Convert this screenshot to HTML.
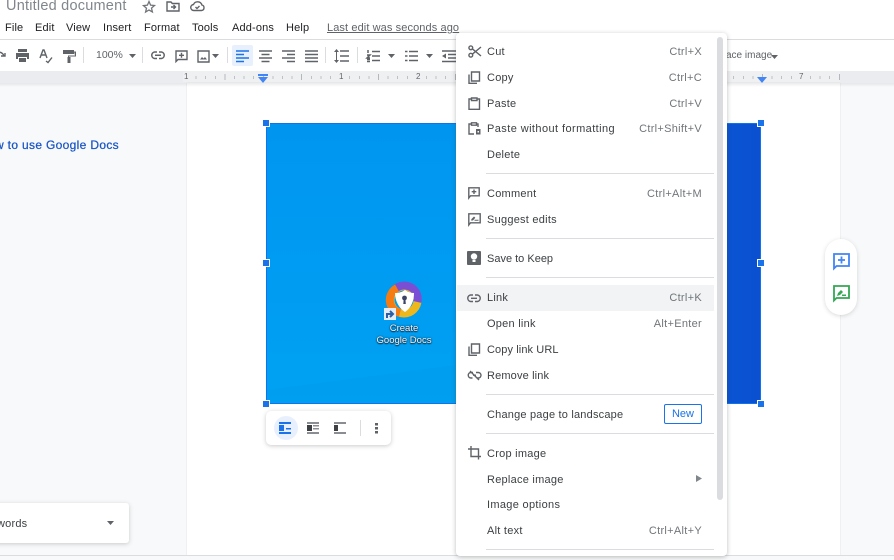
<!DOCTYPE html>
<html><head><meta charset="utf-8">
<style>
html,body{margin:0;padding:0}
body{width:894px;height:560px;overflow:hidden;position:relative;background:#f8f9fa;font-family:"Liberation Sans",sans-serif;color:#3c4043}
.a{position:absolute;white-space:nowrap}
.m{font-size:11px;line-height:14px;color:#3c4043;letter-spacing:.25px}
.k{font-size:11px;line-height:14px;color:#70757a;right:192px;letter-spacing:.3px}
.menu{font-size:11px;line-height:14px;color:#202124;top:21px;letter-spacing:.15px}
.sep{position:absolute;left:486px;width:228px;height:1px;background:#dadce0}
svg{position:absolute;overflow:visible}
.ic{fill:none;stroke:#5f6368;stroke-width:1.4}
.tl{fill:none;stroke:#5f6368;stroke-width:1.5}
.n{font-size:8px;line-height:10px;color:#5f6368;background:#eff0f2;padding:0 1px;top:72px}
</style></head><body>
<!-- header -->
<div class="a" style="left:0;top:0;width:894px;height:40px;background:#fff"></div>
<div class="a" style="left:0;top:39px;width:894px;height:1px;background:#dadce0"></div>
<div class="a" style="left:6px;top:-3px;font-size:14.5px;line-height:18px;color:#80868b;letter-spacing:.22px">Untitled document</div>
<svg style="left:142px;top:0" width="14" height="13" viewBox="0 0 14 13"><path fill="none" stroke="#70757a" stroke-width="1.300" d="M7 1.500l1.600 3.600 3.900.4-3 2.600.9 3.800L7 10l-3.400 2 .9-3.800-3-2.600 3.900-.4z"/></svg>
<svg style="left:166px;top:1px" width="14" height="11" viewBox="0 0 14 11"><path class="ic" d="M1 1h4l1.300 1.500H13v7.500H1z"/><path d="M5 6h4M7.500 4l2 2-2 2" class="ic"/></svg>
<svg style="left:190px;top:0" width="15" height="12" viewBox="0 0 15 12"><path class="ic" d="M4 10.500h7.500a2.800 2.800 0 0 0 .4-5.500A4.500 4.500 0 0 0 3.500 4.500 3 3 0 0 0 4 10.500z"/><path class="ic" stroke-width="1" d="M5.500 7l1.500 1.500 2.500-2.500"/></svg>
<div class="a menu" style="left:5px">File</div>
<div class="a menu" style="left:35px">Edit</div>
<div class="a menu" style="left:66px">View</div>
<div class="a menu" style="left:103px">Insert</div>
<div class="a menu" style="left:144px">Format</div>
<div class="a menu" style="left:192px">Tools</div>
<div class="a menu" style="left:232px">Add-ons</div>
<div class="a menu" style="left:286px">Help</div>
<div class="a" style="left:327px;top:21px;font-size:11px;line-height:14px;color:#5f6368;text-decoration:underline;letter-spacing:.1px">Last edit was seconds ago</div>
<!-- toolbar -->
<div class="a" style="left:0;top:40px;width:894px;height:31px;background:#fff"></div>
<svg style="left:0;top:50px" width="8" height="10" viewBox="0 0 8 10"><path class="ic" d="M-2 2c3 0 5 1 6 4M1 6h4V3" stroke-width="1.500"/></svg>
<svg style="left:15px;top:49px" width="15" height="13" viewBox="0 0 15 13"><path fill="#5f6368" d="M3 0h9v3H3zM1 4h13v6h-2V8H3v2H1zM4 9h7v4H4z"/></svg>
<svg style="left:39px;top:49px" width="15" height="14" viewBox="0 0 15 14"><path class="ic" d="M1 9l3-8h1l3 8M2.300 6h4.500M7 12l2 1.500 4-5"/></svg>
<svg style="left:63px;top:49px" width="13" height="14" viewBox="0 0 13 14"><path fill="#5f6368" d="M0 1h11v4H0zM11 2.500h2v5H6V9H5V6.500h7zM4.500 8h3v6h-3z"/></svg>
<div class="a" style="left:83px;top:47px;width:1px;height:16px;background:#dadce0"></div>
<div class="a" style="left:96px;top:48px;font-size:10.500px;line-height:14px;color:#5f6368">100%</div>
<svg style="left:129px;top:54px" width="8" height="4"><path fill="#5f6368" d="M0 0h7L3.500 4z"/></svg>
<div class="a" style="left:142px;top:47px;width:1px;height:16px;background:#dadce0"></div>
<svg style="left:151px;top:51px" width="14" height="9" viewBox="0 0 14 9"><path class="tl" d="M6 1H3.500a3.300 3.300 0 0 0 0 6.500H6M8 1h2.500a3.300 3.300 0 0 1 0 6.500H8M4 4.300h6"/></svg>
<svg style="left:175px;top:50px" width="13" height="13" viewBox="0 0 13 13"><path class="ic" d="M1 1h11v8.500H3L1 11.500zM6.500 2.800v5M4 5.300h5"/></svg>
<svg style="left:197px;top:50px" width="13" height="13" viewBox="0 0 13 13"><path class="ic" d="M1 1h11v11H1z"/><path fill="#5f6368" d="M3 9.500l2-2.500 1.500 1.500L8 7l2 2.500z"/></svg>
<svg style="left:212px;top:54px" width="8" height="4"><path fill="#5f6368" d="M0 0h7L3.500 4z"/></svg>
<div class="a" style="left:227px;top:47px;width:1px;height:16px;background:#dadce0"></div>
<div class="a" style="left:232px;top:45px;width:21px;height:21px;border-radius:2px;background:#e8f0fe"></div>
<svg style="left:236px;top:50px" width="13" height="12"><path stroke="#1a73e8" stroke-width="1.500" d="M0 1h13M0 4.500h8M0 8h13M0 11.500h8"/></svg>
<svg style="left:259px;top:50px" width="13" height="12"><path stroke="#5f6368" stroke-width="1.500" d="M0 1h13M2.500 4.500h8M0 8h13M2.500 11.500h8"/></svg>
<svg style="left:282px;top:50px" width="13" height="12"><path stroke="#5f6368" stroke-width="1.500" d="M0 1h13M5 4.500h8M0 8h13M5 11.500h8"/></svg>
<svg style="left:305px;top:50px" width="13" height="12"><path stroke="#5f6368" stroke-width="1.500" d="M0 1h13M0 4.500h13M0 8h13M0 11.500h13"/></svg>
<div class="a" style="left:325px;top:47px;width:1px;height:16px;background:#dadce0"></div>
<svg style="left:334px;top:49px" width="15" height="14" viewBox="0 0 15 14"><path stroke="#5f6368" stroke-width="1.500" d="M6 2h9M6 7h9M6 12h9" /><path fill="#5f6368" d="M0 3l2.500-3L5 3zM0 11l2.500 3L5 11zM2 3h1v8H2z"/></svg>
<div class="a" style="left:357px;top:47px;width:1px;height:16px;background:#dadce0"></div>
<svg style="left:367px;top:50px" width="13" height="12"><path stroke="#5f6368" stroke-width="1.500" d="M5 1.500h8M5 6h8M5 10.500h8M1 0v3M0 5h3L0 8h3M0 9.500h3M0 11.500h3"/></svg>
<svg style="left:388px;top:54px" width="8" height="4"><path fill="#5f6368" d="M0 0h7L3.500 4z"/></svg>
<svg style="left:405px;top:50px" width="13" height="12"><path stroke="#5f6368" stroke-width="1.500" d="M4 1.500h9M4 6h9M4 10.500h9M0 1.500h2.500M0 6h2.500M0 10.500h2.500"/></svg>
<svg style="left:426px;top:54px" width="8" height="4"><path fill="#5f6368" d="M0 0h7L3.500 4z"/></svg>
<svg style="left:442px;top:50px" width="14" height="12"><path stroke="#5f6368" stroke-width="1.500" d="M0 1h14M6 4.500h8M6 8h8M0 11.500h14"/><path fill="#5f6368" d="M4 3.500v5L0 6z"/></svg>
<div class="a" style="left:726px;top:49px;font-size:10px;line-height:14px;color:#5f6368">ace image</div>
<svg style="left:771px;top:55px" width="7" height="4"><path fill="#5f6368" d="M0 0h7L3.500 4z"/></svg>
<!-- ruler -->
<div class="a" style="left:0;top:71px;width:894px;height:12px;background:#eaecef"></div>
<div class="a" style="left:187px;top:71px;width:653px;height:12px;background:#eff0f2"></div>
<div class="a" style="left:186px;top:75.500px;width:655px;height:3px;background:repeating-linear-gradient(90deg,#bdc1c6 0 1px,transparent 1px 9.600px)"></div>
<div class="a" style="left:186px;top:74px;width:655px;height:6px;background:repeating-linear-gradient(90deg,#b4b7bb 0 1px,transparent 1px 38.400px)"></div>
<div class="a n" style="left:183px">1</div>
<div class="a n" style="left:338px">1</div>
<div class="a n" style="left:415px">2</div>
<div class="a n" style="left:798px">7</div>
<svg style="left:258px;top:74px" width="10" height="9"><path fill="#4285f4" d="M0 0h10v2H0zM0 3h10L5 9z"/></svg>
<svg style="left:757px;top:77px" width="10" height="6"><path fill="#4285f4" d="M0 0h10L5 6z"/></svg>
<!-- page -->
<div class="a" style="left:187px;top:83px;width:653px;height:473px;background:#fff;box-shadow:0 0 1px #c8cacd"></div>
<div class="a" style="left:0;top:83px;width:894px;height:4px;background:linear-gradient(rgba(60,64,67,.1),rgba(60,64,67,0))"></div>
<div class="a" style="left:0;top:555px;width:894px;height:5px;background:#f8f9fa;border-top:1px solid #dadce0;box-sizing:border-box"></div>
<!-- left outline -->
<div class="a" style="left:-5px;top:137px;font-size:12px;line-height:16px;color:#1a56c4;letter-spacing:.33px;-webkit-text-stroke:.25px #1a56c4">w to use Google Docs</div>
<div class="a" style="left:-40px;top:503px;width:169px;height:40px;background:#fff;border-radius:3px;box-shadow:0 1px 4px rgba(60,64,67,.25)"></div>
<div class="a" style="left:-3px;top:517px;font-size:11px;line-height:14px;color:#3c4043;letter-spacing:.2px">words</div>
<svg style="left:107px;top:521px" width="7" height="4"><path fill="#5f6368" d="M0 0h7L3.500 4z"/></svg>
<!-- image -->
<div class="a" style="left:266px;top:123px;width:495px;height:281px;overflow:hidden;box-sizing:border-box;border:1px solid #0f73ee;background:linear-gradient(90deg,#049ff0 0%,#0097f2 38%,#0878e6 55%,#0a5bd8 85%,#0a50d0 100%)">
<div style="position:absolute;left:0;top:0;width:190px;height:279px;background:linear-gradient(#0096f0,#009cf2 60%,#00a2f2)"></div>
<svg style="left:0;top:0" width="190" height="279"><path fill="#009cec" d="M0 266L190 241V279H0z" opacity=".5"/></svg>
</div>
<!-- avast icon -->
<svg style="left:386px;top:282px" width="36" height="36" viewBox="0 0 36 36">
<circle cx="18" cy="18" r="13.500" fill="none" stroke="#eeb81c" stroke-width="8"/>
<path d="M7 9.500A13.500 13.500 0 0 1 31.400 20" fill="none" stroke="#7b4fd4" stroke-width="8"/>
<path d="M11 6A13.500 13.500 0 0 0 14 31" fill="none" stroke="#f57c12" stroke-width="8"/>
<path d="M19 8c3 2 6 3 9 3 0 8-3 15-9 19-6-4-10-11-10-19 4 0 7-1 10-3z" fill="#fff"/>
<circle cx="18.500" cy="16" r="2.400" fill="#3a4466"/><path d="M17.700 17h1.700l.4 5h-2.500z" fill="#3a4466"/>
</svg>
<div class="a" style="left:384px;top:308px;width:12px;height:12px;background:#e4edf6"></div>
<svg style="left:386px;top:310px" width="8" height="8"><path stroke="#2a5fa8" stroke-width="2" fill="none" d="M1 8V4h5M4 1l3 3-3 3"/></svg>
<div class="a" style="left:364px;top:323px;width:80px;text-align:center;font-size:9.500px;line-height:12px;color:#eef3f8;text-shadow:0 1px 1px #123,0 0 2px #123">Create<br>Google Docs</div>
<!-- handles -->
<div class="a" style="left:262px;top:119px;width:8px;height:8px;background:#1a73e8;border:1px solid #fff;box-sizing:border-box"></div>
<div class="a" style="left:262px;top:259px;width:8px;height:8px;background:#1a73e8;border:1px solid #fff;box-sizing:border-box"></div>
<div class="a" style="left:262px;top:400px;width:8px;height:8px;background:#1a73e8;border:1px solid #fff;box-sizing:border-box"></div>
<div class="a" style="left:757px;top:119px;width:8px;height:8px;background:#1a73e8;border:1px solid #fff;box-sizing:border-box"></div>
<div class="a" style="left:757px;top:259px;width:8px;height:8px;background:#1a73e8;border:1px solid #fff;box-sizing:border-box"></div>
<div class="a" style="left:757px;top:400px;width:8px;height:8px;background:#1a73e8;border:1px solid #fff;box-sizing:border-box"></div>
<!-- image toolbar -->
<div class="a" style="left:266px;top:411px;width:125px;height:34px;background:#fff;border-radius:5px;box-shadow:0 1px 4px rgba(60,64,67,.28)"></div>
<div class="a" style="left:274px;top:416px;width:24px;height:24px;border-radius:50%;background:#e8f0fe"></div>
<svg style="left:279px;top:422px" width="13" height="12"><path fill="#1a73e8" d="M0 0h12v2H0zM0 3h5v6H0zM7 6h5v1.500H7zM0 10h12v2H0z"/></svg>
<svg style="left:307px;top:422px" width="13" height="12"><path fill="#8a8e93" d="M0 0h12v2H0zM6 3h6v1.500H6zM6 6h6v1.500H6zM0 10h12v2H0z"/><path fill="#3c4043" d="M0 3h5v6H0z"/></svg>
<svg style="left:334px;top:422px" width="13" height="12"><path fill="#8a8e93" d="M0 0h12v2H0zM0 10h12v2H0z"/><path fill="#3c4043" d="M0 3h4v6H0z"/></svg>
<div class="a" style="left:360px;top:420px;width:1px;height:16px;background:#dadce0"></div>
<svg style="left:375px;top:423px" width="3" height="11"><path fill="#5f6368" d="M0 0h3v2.500H0zM0 4h3v2.500H0zM0 8h3v2.500H0z"/></svg>
<!-- side pill -->
<div class="a" style="left:825px;top:239px;width:32px;height:76px;background:#fff;border-radius:16px;box-shadow:0 1px 4px rgba(60,64,67,.2)"></div>
<svg style="left:833px;top:253px" width="17" height="17" viewBox="0 0 17 17"><path fill="none" stroke="#4285f4" stroke-width="1.800" d="M1 1h15v12H3.500L1 15.500zM8.500 3.500v7M5 7h7"/></svg>
<svg style="left:833px;top:285px" width="17" height="17" viewBox="0 0 17 17"><path fill="none" stroke="#34a853" stroke-width="1.800" d="M1 1h15v12H3.500L1 15.500z"/><path fill="#34a853" d="M4 11l1-3 3-3 2 2-3 3zM9 9.500h4v1.500H9z"/></svg>
<!-- context menu -->
<div class="a" style="left:456px;top:33px;width:271px;height:523px;background:#fff;border-radius:4px;box-shadow:0 1px 5px rgba(60,64,67,.35)"></div>
<div class="a" style="left:717px;top:37px;width:6px;height:463px;background:#dadce0;border-radius:3px"></div>
<div class="a" style="left:457px;top:285px;width:257px;height:26px;background:#f1f3f4"></div>
<div class="sep" style="top:173px"></div>
<div class="sep" style="top:238px"></div>
<div class="sep" style="top:277px"></div>
<div class="sep" style="top:394px"></div>
<div class="sep" style="top:433px"></div>
<div class="sep" style="top:549px"></div>

<div class="a m" style="left:487px;top:45px">Cut</div><div class="a k" style="top:45px">Ctrl+X</div>
<div class="a m" style="left:487px;top:71px">Copy</div><div class="a k" style="top:71px">Ctrl+C</div>
<div class="a m" style="left:487px;top:97px">Paste</div><div class="a k" style="top:97px">Ctrl+V</div>
<div class="a m" style="left:487px;top:122px;letter-spacing:.42px">Paste without formatting</div><div class="a k" style="top:122px">Ctrl+Shift+V</div>
<div class="a m" style="left:487px;top:148px">Delete</div>
<div class="a m" style="left:487px;top:187px">Comment</div><div class="a k" style="top:187px">Ctrl+Alt+M</div>
<div class="a m" style="left:487px;top:213px">Suggest edits</div>
<div class="a m" style="left:487px;top:252px;letter-spacing:0">Save to Keep</div>
<div class="a m" style="left:487px;top:291px">Link</div><div class="a k" style="top:291px">Ctrl+K</div>
<div class="a m" style="left:487px;top:317px">Open link</div><div class="a k" style="top:317px">Alt+Enter</div>
<div class="a m" style="left:487px;top:343px;letter-spacing:.1px">Copy link URL</div>
<div class="a m" style="left:487px;top:369px;letter-spacing:.15px">Remove link</div>
<div class="a m" style="left:487px;top:408px;letter-spacing:.2px">Change page to landscape</div>
<div class="a" style="left:664px;top:404px;width:38px;height:20px;box-sizing:border-box;border:1px solid #1a73e8;border-radius:2px;color:#1a73e8;font-size:11px;line-height:18px;text-align:center">New</div>
<div class="a m" style="left:487px;top:447px">Crop image</div>
<div class="a m" style="left:487px;top:473px">Replace image</div>
<svg style="left:696px;top:475px" width="6" height="7"><path fill="#80868b" d="M0 0l6 3.500L0 7z"/></svg>
<div class="a m" style="left:487px;top:498px;letter-spacing:.32px">Image options</div>
<div class="a m" style="left:487px;top:524px">Alt text</div><div class="a k" style="top:524px">Ctrl+Alt+Y</div>

<!-- menu icons -->
<svg style="left:468px;top:45px" width="14" height="13" viewBox="0 0 14 13"><circle class="ic" cx="2.800" cy="2.800" r="1.900"/><circle class="ic" cx="2.800" cy="10.200" r="1.900"/><path class="ic" stroke-width="1.600" d="M4.300 3.800L13 11M4.300 9.200L13 2"/></svg>
<svg style="left:468px;top:71px" width="12" height="13" viewBox="0 0 12 13"><path class="ic" d="M3.500 1h8v9h-8zM1 3.500V12.300h8"/></svg>
<svg style="left:468px;top:97px" width="12" height="13" viewBox="0 0 12 13"><path class="ic" d="M3.500 2H1v10.300h10.500V2H9"/><path class="ic" d="M3.500 1h5.500v2.500H3.500z"/></svg>
<svg style="left:468px;top:122px" width="13" height="13" viewBox="0 0 13 13"><path class="ic" d="M10 5V2H8M4 2H1v10h5"/><path class="ic" d="M3.500 .8h5v2.400h-5z"/><path fill="#5f6368" d="M8 7h4.500v5.500H8z"/><path fill="#fff" d="M9.500 9h1.500v1.500H9.500z"/></svg>
<svg style="left:468px;top:187px" width="12" height="12" viewBox="0 0 12 12"><path class="ic" d="M.8.800h10.400v8H2.500L.8 11zM6 2.500v4.500M3.700 4.700h4.600"/></svg>
<svg style="left:468px;top:213px" width="13" height="13" viewBox="0 0 13 13"><path class="ic" d="M.8.800h11.400v9H2.500L.8 12z"/><path fill="#5f6368" d="M3 7.500l.5-1.500 2.500-2.500 1.300 1.300L5 7.500zM6.500 6.800h4v1h-4z"/></svg>
<div class="a" style="left:467px;top:251px;width:14px;height:14px;background:#5f6368;border-radius:1px"></div>
<svg style="left:470px;top:253px" width="8" height="10"><circle cx="4" cy="3.500" r="3.200" fill="#fff"/><path fill="#fff" d="M2.500 7h3v2h-3z"/></svg>
<svg style="left:467px;top:294px" width="14" height="9" viewBox="0 0 14 9"><path class="ic" d="M6 1H3.500a3.300 3.300 0 0 0 0 6.500H6M8 1h2.500a3.300 3.300 0 0 1 0 6.500H8M4 4.300h6"/></svg>
<svg style="left:468px;top:343px" width="12" height="13" viewBox="0 0 12 13"><path class="ic" d="M3.500 1h8v9h-8zM1 3.500V12.300h8"/></svg>
<svg style="left:468px;top:370px" width="13" height="11" viewBox="0 0 13 11"><path class="ic" d="M5 2.500H3A2.700 2.700 0 0 0 3 8h1.500M8 2.500h2A2.700 2.700 0 0 1 10.500 8H9M2 1l9 9M5 5.200h3"/></svg>
<svg style="left:468px;top:446px" width="13" height="14" viewBox="0 0 13 14"><path class="ic" stroke-width="1.500" d="M3 0v10.500h10M0 3h10.500v10.500"/></svg>
</body></html>
